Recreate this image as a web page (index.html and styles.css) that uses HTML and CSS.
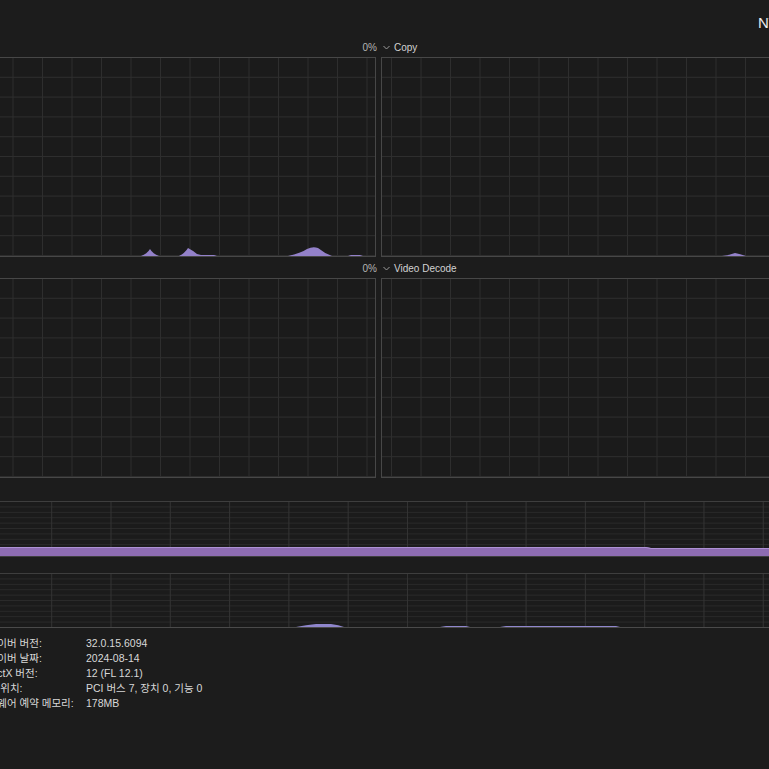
FILE: index.html
```html
<!DOCTYPE html>
<html lang="ko">
<head>
<meta charset="utf-8">
<title>작업 관리자 - GPU</title>
<link rel="stylesheet" href="styles.css">
</head>
<body>
<div class="page">
  <div class="title">NVIDIA GeForce RTX 4060</div>

  <section class="engines">
    <div class="engine">
      <div class="eng-head">
        <span class="eng-name"><svg class="chev" viewBox="0 0 7 5" width="7" height="5"><polyline points="0.5,1 3.5,4 6.5,1"/></svg>3D</span>
        <span class="pct">0%</span>
      </div>
      <div class="graph left">
        <svg class="plot" viewBox="0 0 574 198" preserveAspectRatio="none">
          <path d="M340 198 Q346 196 349 191 Q352 196 358 198 Z"/>
          <path d="M378 198 Q384 195 387 190 Q391 192 396 196 L400 197 L413 197 L416 198 Z"/>
          <path d="M487 198 Q500 195 506 191 Q512 188 517 190 Q523 195 531 198 Z"/>
          <path d="M547 198 L550 197 L559 197 L562 198 Z"/>
        </svg>
      </div>
    </div>
    <div class="engine">
      <div class="eng-head">
        <span class="eng-name"><svg class="chev" viewBox="0 0 7 5" width="7" height="5"><polyline points="0.5,1 3.5,4 6.5,1"/></svg>Copy</span>
        <span class="pct">0%</span>
      </div>
      <div class="graph right">
        <svg class="plot" viewBox="0 0 574 198" preserveAspectRatio="none">
          <path d="M340 198 Q348 197 353 195 Q358 196 364 198 Z"/>
        </svg>
      </div>
    </div>
    <div class="engine">
      <div class="eng-head">
        <span class="eng-name"><svg class="chev" viewBox="0 0 7 5" width="7" height="5"><polyline points="0.5,1 3.5,4 6.5,1"/></svg>Video Encode</span>
        <span class="pct">0%</span>
      </div>
      <div class="graph left"></div>
    </div>
    <div class="engine">
      <div class="eng-head">
        <span class="eng-name"><svg class="chev" viewBox="0 0 7 5" width="7" height="5"><polyline points="0.5,1 3.5,4 6.5,1"/></svg>Video Decode</span>
        <span class="pct">0%</span>
      </div>
      <div class="graph right"></div>
    </div>
  </section>

  <section class="memory">
    <div class="mem-head"><span>전용 GPU 메모리 사용량</span><span>8.0GB</span></div>
    <div class="mgraph">
      <svg class="plot" viewBox="0 0 1155 54" preserveAspectRatio="none">
        <path class="band" d="M0 45 L845 45 L850 46 L1155 46 L1155 54 L0 54 Z"/>
        <path class="band-edge" d="M0 45.5 L845 45.5 L850 46.5 L1155 46.5"/>
      </svg>
    </div>
    <div class="mem-head short"><span>공유 GPU 메모리 사용량</span><span>15.9GB</span></div>
    <div class="mgraph second">
      <svg class="plot" viewBox="0 0 1155 53" preserveAspectRatio="none">
        <path d="M495 53 Q505 51 515 50 L530 50 Q538 51 543 53 Z"/>
        <path d="M639 53 L645 52 L665 52 L669 53 Z"/>
        <path d="M699 53 L705 52 L815 52 L819 53 Z"/>
      </svg>
    </div>
  </section>

  <dl class="info">
    <dt>드라이버 버전:</dt><dd>32.0.15.6094</dd>
    <dt>드라이버 날짜:</dt><dd>2024-08-14</dd>
    <dt>DirectX 버전:</dt><dd>12 (FL 12.1)</dd>
    <dt>실제 위치:</dt><dd>PCI 버스 7, 장치 0, 기능 0</dd>
    <dt>하드웨어 예약 메모리:</dt><dd>178MB</dd>
  </dl>
</div>
</body>
</html>
```

FILE: styles.css
```css
html, body {
  margin: 0;
  padding: 0;
  background: #1c1c1c;
}

body {
  font-family: "Liberation Sans", "Noto Sans CJK KR", sans-serif;
  color: #d6d6d6;
  overflow: hidden;
}

.page {
  width: 769px;
  height: 769px;
  overflow: hidden;
}

.title {
  box-sizing: border-box;
  height: 37px;
  padding: 15px 0 0 758px;
  font-size: 15px;
  line-height: 16px;
  white-space: nowrap;
  color: #ededed;
}

.engines {
  display: grid;
  grid-template-columns: 576px 576px;
  column-gap: 5px;
  row-gap: 1px;
  width: 1157px;
  margin-left: -200px;
}

.eng-head {
  height: 20px;
  display: flex;
  justify-content: space-between;
  align-items: center;
  font-size: 10px;
  white-space: nowrap;
}

.eng-name {
  display: flex;
  align-items: center;
  color: #d2d2d2;
}

.chev {
  margin: 0 4px 0 2px;
  fill: none;
  stroke: #9a9a9a;
  stroke-width: 1;
}

.pct {
  color: #b4b4b4;
  margin-right: -1px;
}

.graph {
  box-sizing: border-box;
  height: 200px;
  border: 1px solid #474747;
  background-color: #1b1b1b;
  background-image:
    linear-gradient(to right, transparent calc(100% - 1px), #2e2e2e 0),
    linear-gradient(to bottom, transparent calc(100% - 1px), #2e2e2e 0);
  background-size: 29.5px 19.8px;
}

.graph.left {
  background-position: 6px 0;
}

.graph.right {
  background-position: 10px 0;
}

.plot {
  display: block;
  width: 100%;
  height: 100%;
  fill: #9381c9;
}

.memory {
  width: 1157px;
  margin-left: -200px;
}

.mem-head {
  height: 23px;
  display: flex;
  justify-content: space-between;
  align-items: center;
  font-size: 10px;
  color: #c8c8c8;
}

.mem-head.short {
  height: 16px;
}

.mgraph {
  box-sizing: border-box;
  height: 56px;
  border: 1px solid #3e3e3e;
  background-color: #1b1b1b;
  background-image:
    linear-gradient(to right, transparent calc(100% - 1px), #333333 0),
    linear-gradient(to bottom, transparent calc(100% - 1px), #2a2a2a 0);
  background-size: 59.3px 5.4px;
  background-position: 14px 0;
}

.mgraph.second {
  height: 55px;
  border-bottom-color: #4a4a4a;
}

.mgraph .band {
  fill: #8d6cb2;
}

.mgraph .band-edge {
  fill: none;
  stroke: #ad91d4;
  stroke-width: 1;
}

.mgraph.second .plot {
  fill: #8f86cc;
}

.info {
  display: grid;
  grid-template-columns: 108px auto;
  grid-auto-rows: 15px;
  margin: 8px 0 0 -22px;
  font-size: 10.5px;
  line-height: 15px;
  white-space: nowrap;
}

.info dt,
.info dd {
  margin: 0;
  color: #d8d8d8;
}
```
